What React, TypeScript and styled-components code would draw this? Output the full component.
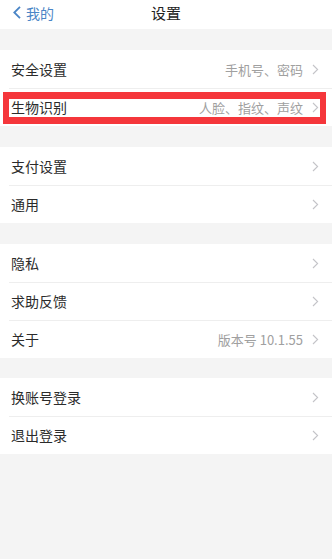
import React from "react";
import styled, { createGlobalStyle } from "styled-components";

const GlobalStyle = createGlobalStyle`
  html, body {
    margin: 0;
    padding: 0;
    height: 100%;
    background: #f4f4f4;
  }
  body {
    font-family: "Noto Sans CJK SC", "Noto Sans", sans-serif;
    -webkit-font-smoothing: antialiased;
  }
`;

const Page = styled.div`
  width: 332px;
  min-height: 559px;
  background: #f4f4f4;
`;

const Header = styled.div`
  height: 29px;
  background: #fff;
  display: flex;
  align-items: center;
  justify-content: center;
  position: relative;
`;

const Back = styled.div`
  position: absolute;
  left: 13px;
  top: 0;
  height: 25px;
  display: flex;
  align-items: center;
  gap: 5px;
  color: #4a85c6;
  font-size: 14px;
`;

const Title = styled.div`
  font-size: 15px;
  color: #222;
  margin-top: -5px;
`;

const Group = styled.div`
  background: #fff;
  margin-top: ${(p: { $gap: number }) => p.$gap}px;
`;

const Row = styled.div`
  position: relative;
  height: 38px;
  display: flex;
  align-items: center;
  padding: 0 13px 0 11px;
  &:not(:first-child)::before {
    content: "";
    position: absolute;
    top: 0;
    left: 9px;
    right: 0;
    height: 1px;
    background: #eeeeee;
  }
`;

const Label = styled.div`
  flex: 1;
  font-size: 14px;
  color: #2b2b2b;
`;

const Detail = styled.div`
  font-size: 13px;
  color: #a0a0a0;
  margin-right: 9px;
`;

const Highlight = styled.div`
  position: absolute;
  left: 3px;
  right: 6px;
  top: 4px;
  bottom: 2px;
  border: solid #f5363b;
  border-width: 7px 6px 7px 6px;
  pointer-events: none;
`;

const Chevron = () => (
  <svg width="7" height="11" viewBox="0 0 7 11">
    <polyline points="1,1 5.6,5.5 1,10" fill="none" stroke="#c4c4c8" strokeWidth="1.1" />
  </svg>
);

const BackArrow = () => (
  <svg width="8" height="13" viewBox="0 0 8 13">
    <polyline points="7,0.8 1.3,6.5 7,12.2" fill="none" stroke="#4a85c6" strokeWidth="1.8" />
  </svg>
);

type Item = { label: string; detail?: string; marked?: boolean };

const groups: { gap: number; items: Item[] }[] = [
  {
    gap: 21,
    items: [
      { label: "安全设置", detail: "手机号、密码" },
      { label: "生物识别", detail: "人脸、指纹、声纹", marked: true },
    ],
  },
  { gap: 21, items: [{ label: "支付设置" }, { label: "通用" }] },
  {
    gap: 21,
    items: [{ label: "隐私" }, { label: "求助反馈" }, { label: "关于", detail: "版本号 10.1.55" }],
  },
  { gap: 20, items: [{ label: "换账号登录" }, { label: "退出登录" }] },
];

export default function App() {
  return (
    <Page>
      <GlobalStyle />
      <Header>
        <Back>
          <BackArrow />
          <span>我的</span>
        </Back>
        <Title>设置</Title>
      </Header>
      {groups.map((g, i) => (
        <Group key={i} $gap={g.gap}>
          {g.items.map((it) => (
            <Row key={it.label}>
              <Label>{it.label}</Label>
              {it.detail && <Detail>{it.detail}</Detail>}
              <Chevron />
              {it.marked && <Highlight />}
            </Row>
          ))}
        </Group>
      ))}
    </Page>
  );
}
